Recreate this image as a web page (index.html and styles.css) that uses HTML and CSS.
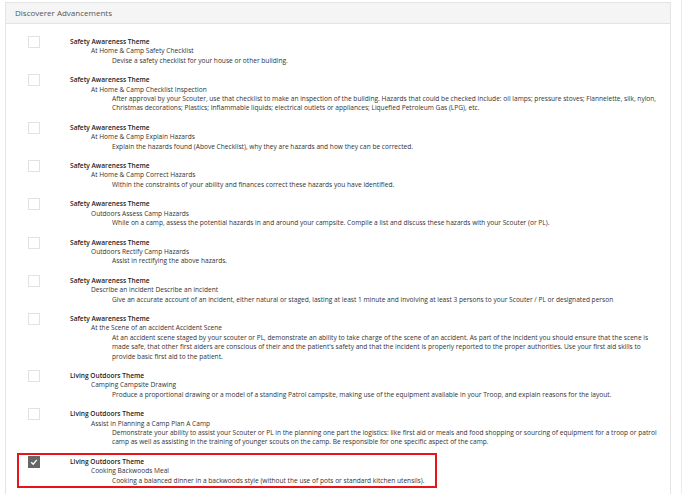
FILE: index.html
```html
<!DOCTYPE html>
<html lang="en">
<head>
    <meta charset="UTF-8">
    <title>Discoverer Advancements</title>
    <link rel="stylesheet" href="styles.css">
</head>
<body>
    <div class="page">
        <div class="panel">
            <div class="panel-head">Discoverer Advancements</div>
            <div class="panel-body">
                <div class="item">
                    <span class="check"></span>
                    <div class="info">
                        <div class="theme">Safety Awareness Theme</div>
                        <div class="name">At Home &amp; Camp Safety Checklist</div>
                        <div class="desc">Devise a safety checklist for your house or other building.</div>
                    </div>
                </div>
                <div class="item">
                    <span class="check"></span>
                    <div class="info">
                        <div class="theme">Safety Awareness Theme</div>
                        <div class="name">At Home &amp; Camp Checklist Inspection</div>
                        <div class="desc">After approval by your Scouter, use that checklist to make an inspection of the building. Hazards that could be checked include: oil lamps; pressure stoves; Flannelette, silk, nylon, Christmas decorations; Plastics; Inflammable liquids; electrical outlets or appliances; Liquefied Petroleum Gas (LPG), etc.</div>
                    </div>
                </div>
                <div class="item">
                    <span class="check"></span>
                    <div class="info">
                        <div class="theme">Safety Awareness Theme</div>
                        <div class="name">At Home &amp; Camp Explain Hazards</div>
                        <div class="desc">Explain the hazards found (Above Checklist), why they are hazards and how they can be corrected.</div>
                    </div>
                </div>
                <div class="item">
                    <span class="check"></span>
                    <div class="info">
                        <div class="theme">Safety Awareness Theme</div>
                        <div class="name">At Home &amp; Camp Correct Hazards</div>
                        <div class="desc">Within the constraints of your ability and finances correct these hazards you have identified.</div>
                    </div>
                </div>
                <div class="item">
                    <span class="check"></span>
                    <div class="info">
                        <div class="theme">Safety Awareness Theme</div>
                        <div class="name">Outdoors Assess Camp Hazards</div>
                        <div class="desc">While on a camp, assess the potential hazards in and around your campsite. Compile a list and discuss these hazards with your Scouter (or PL).</div>
                    </div>
                </div>
                <div class="item">
                    <span class="check"></span>
                    <div class="info">
                        <div class="theme">Safety Awareness Theme</div>
                        <div class="name">Outdoors Rectify Camp Hazards</div>
                        <div class="desc">Assist in rectifying the above hazards.</div>
                    </div>
                </div>
                <div class="item">
                    <span class="check"></span>
                    <div class="info">
                        <div class="theme">Safety Awareness Theme</div>
                        <div class="name">Describe an incident Describe an incident</div>
                        <div class="desc">Give an accurate account of an incident, either natural or staged, lasting at least 1 minute and involving at least 3 persons to your Scouter / PL or designated person</div>
                    </div>
                </div>
                <div class="item">
                    <span class="check"></span>
                    <div class="info">
                        <div class="theme">Safety Awareness Theme</div>
                        <div class="name">At the Scene of an accident Accident Scene</div>
                        <div class="desc">At an accident scene staged by your scouter or PL, demonstrate an ability to take charge of the scene of an accident. As part of the incident you should ensure that the scene is made safe, that other first aiders are conscious of their and the patient's safety and that the incident is properly reported to the proper authorities. Use your first aid skills to provide basic first aid to the patient.</div>
                    </div>
                </div>
                <div class="item">
                    <span class="check"></span>
                    <div class="info">
                        <div class="theme">Living Outdoors Theme</div>
                        <div class="name">Camping Campsite Drawing</div>
                        <div class="desc">Produce a proportional drawing or a model of a standing Patrol campsite, making use of the equipment available in your Troop, and explain reasons for the layout.</div>
                    </div>
                </div>
                <div class="item">
                    <span class="check"></span>
                    <div class="info">
                        <div class="theme">Living Outdoors Theme</div>
                        <div class="name">Assist in Planning a Camp Plan A Camp</div>
                        <div class="desc">Demonstrate your ability to assist your Scouter or PL in the planning one part the logistics: like first aid or meals and food shopping or sourcing of equipment for a troop or patrol camp as well as assisting in the training of younger scouts on the camp. Be responsible for one specific aspect of the camp.</div>
                    </div>
                </div>
                <div class="item marked">
                    <span class="check checked">
                        <svg viewBox="0 0 12 12" width="12" height="12"><path d="M3.2 6.2 L5.2 8.2 L8.8 3.8" fill="none" stroke="#fff" stroke-width="1.3"/></svg>
                    </span>
                    <div class="info">
                        <div class="theme">Living Outdoors Theme</div>
                        <div class="name">Cooking Backwoods Meal</div>
                        <div class="desc">Cooking a balanced dinner in a backwoods style (without the use of pots or standard kitchen utensils).</div>
                    </div>
                    <div class="highlight"></div>
                </div>
            </div>
        </div>
    </div>
</body>
</html>
```

FILE: styles.css
```css
body {
    margin: 0;
    background-color: #ffffff;
    font-family: "Open Sans", Arial, sans-serif;
    color: #333;
}

.page {
    width: 682px;
    min-height: 100vh;
    padding: 2px 0 0 5px;
    box-sizing: border-box;
    border-right: 1px solid #ececec;
}

.panel {
    width: 666px;
    min-height: 520px;
    border: 1px solid #e4e4e4;
    border-bottom: none;
    box-sizing: border-box;
}

.panel-head {
    height: 20px;
    line-height: 20px;
    padding-left: 9px;
    background-color: #f5f5f5;
    border-bottom: 1px solid #e4e4e4;
    font-size: 8px;
    color: #555;
}

.panel-body {
    padding: 13px 5px 0 22px;
}

.item {
    display: flex;
    position: relative;
    margin-bottom: 10px;
    font-size: 6.6px;
    line-height: 9.4px;
}

.check {
    flex: none;
    width: 12px;
    height: 12px;
    margin-top: -1px;
    margin-right: 30px;
    border: 1px solid #e2e2e2;
    box-sizing: border-box;
    background-color: #fff;
}

.check.checked {
    background-color: #666;
    border-color: #666;
}

.check svg {
    display: block;
    margin: -1px;
}

.info {
    flex: 1;
}

.theme {
    font-weight: 600;
    color: #222;
}

.name {
    padding-left: 21px;
}

.desc {
    padding-left: 42px;
}

.highlight {
    position: absolute;
    top: -4px;
    left: -11px;
    width: 420px;
    height: 35px;
    border: 2px solid #e8141a;
    box-sizing: border-box;
}
```
